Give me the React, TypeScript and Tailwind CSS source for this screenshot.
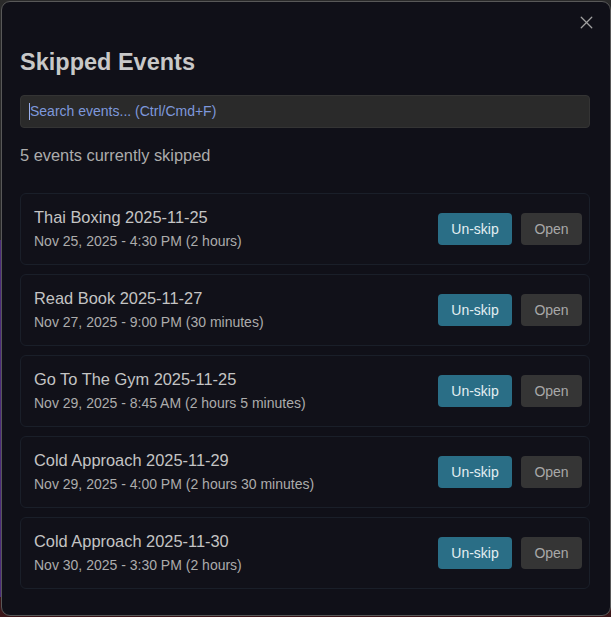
import { X } from "lucide-react";

type SkippedEvent = { title: string; when: string };

const events: SkippedEvent[] = [
  { title: "Thai Boxing 2025-11-25", when: "Nov 25, 2025 - 4:30 PM (2 hours)" },
  { title: "Read Book 2025-11-27", when: "Nov 27, 2025 - 9:00 PM (30 minutes)" },
  { title: "Go To The Gym 2025-11-25", when: "Nov 29, 2025 - 8:45 AM (2 hours 5 minutes)" },
  { title: "Cold Approach 2025-11-29", when: "Nov 29, 2025 - 4:00 PM (2 hours 30 minutes)" },
  { title: "Cold Approach 2025-11-30", when: "Nov 30, 2025 - 3:30 PM (2 hours)" },
];

const EventRow = ({ item }: { item: SkippedEvent }) => (
  <div className="flex items-center justify-between h-[72px] pl-[13px] pr-[7px] rounded-md border border-[#1a1f29] bg-[#111119]">
    <div className="flex flex-col gap-[4px]">
      <div className="text-[16.4px] leading-[20px] text-[#c4c4c4]">{item.title}</div>
      <div className="text-[14px] leading-[20px] text-[#acacac]">{item.when}</div>
    </div>
    <div className="flex gap-[9px]">
      <button className="h-[32px] w-[74px] rounded-[4px] bg-[#2a6e86] text-[14px] text-[#e4eef2]">Un-skip</button>
      <button className="h-[32px] w-[61px] rounded-[4px] bg-[#353535] text-[14px] text-[#a8a8a8]">Open</button>
    </div>
  </div>
);

export default function App() {
  return (
    <div className="h-[617px] w-[611px] overflow-hidden bg-[#2a2a2a] relative" style={{ fontFamily: '"Liberation Sans", Arial, sans-serif' }}>
      <div className="absolute left-0 top-[240px] w-[2px] h-[360px] bg-[#4b2a7a]" />
      <div className="absolute left-0 bottom-0 w-full h-[20px] bg-[#3a1518]" />
      <div className="absolute left-px top-px w-[610px] h-[615px] rounded-[9px] border border-[#585858] bg-[#101018] flex flex-col pl-[18px] pr-[20px]">
        <div className="flex justify-end pt-[10px]">
          <X className="w-[21px] h-[21px] text-[#a0a0a0] mr-[-7px]" strokeWidth={1.5} />
        </div>
        <h2 className="mt-[15px] text-[23.5px] leading-[28px] font-bold text-[#c8c8c8]">Skipped Events</h2>
        <div className="mt-[19px] h-[33px] rounded-[4px] border border-[#343434] bg-[#2a2a2a] flex items-center px-[8px]">
          <span className="w-px h-[17px] bg-[#9ab0ee]" />
          <span className="text-[14px] text-[#7e98dc]">Search events... (Ctrl/Cmd+F)</span>
        </div>
        <div className="mt-[17px] text-[16.4px] leading-[20px] text-[#acacac]">5 events currently skipped</div>
        <div className="mt-[28px] flex flex-col gap-[9px]">
          {events.map((e) => (
            <EventRow key={e.title + e.when} item={e} />
          ))}
        </div>
      </div>
    </div>
  );
}
